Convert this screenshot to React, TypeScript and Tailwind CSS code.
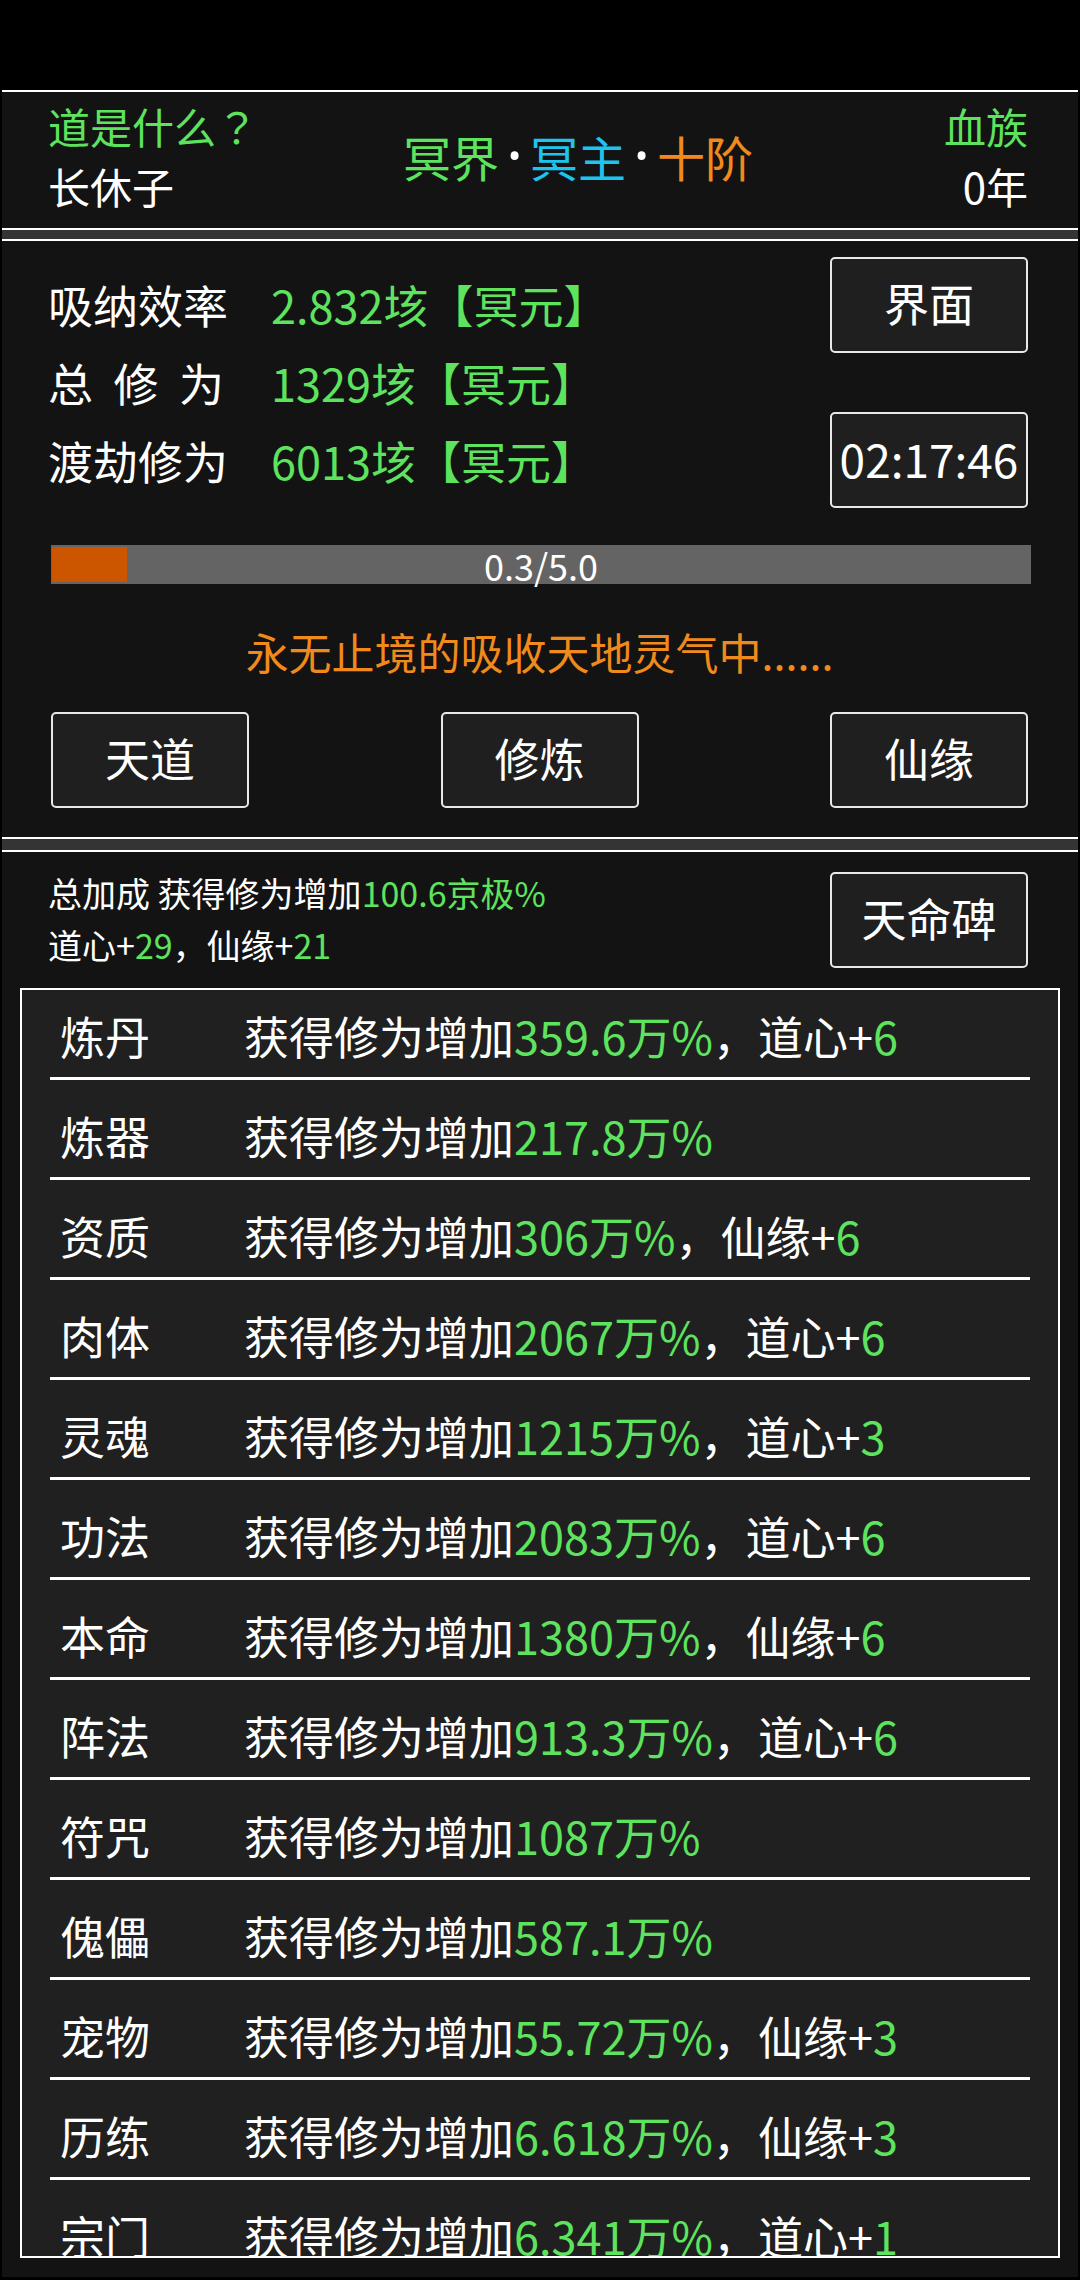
import type { ReactNode } from "react";

const FONT = { fontFamily: '"Noto Sans CJK SC", "Noto Sans", sans-serif' };
const JP = { fontFamily: '"Noto Sans CJK JP", "Noto Sans CJK SC", sans-serif' };
const LATIN = { fontFamily: '"Noto Sans", "DejaVu Sans", sans-serif' };

type Bonus = {
  name: string;
  value: string;
  extra?: { label: string; amount: string };
};

const BONUSES: Bonus[] = [
  { name: "炼丹", value: "359.6万%", extra: { label: "道心+", amount: "6" } },
  { name: "炼器", value: "217.8万%" },
  { name: "资质", value: "306万%", extra: { label: "仙缘+", amount: "6" } },
  { name: "肉体", value: "2067万%", extra: { label: "道心+", amount: "6" } },
  { name: "灵魂", value: "1215万%", extra: { label: "道心+", amount: "3" } },
  { name: "功法", value: "2083万%", extra: { label: "道心+", amount: "6" } },
  { name: "本命", value: "1380万%", extra: { label: "仙缘+", amount: "6" } },
  { name: "阵法", value: "913.3万%", extra: { label: "道心+", amount: "6" } },
  { name: "符咒", value: "1087万%" },
  { name: "傀儡", value: "587.1万%" },
  { name: "宠物", value: "55.72万%", extra: { label: "仙缘+", amount: "3" } },
  { name: "历练", value: "6.618万%", extra: { label: "仙缘+", amount: "3" } },
  { name: "宗门", value: "6.341万%", extra: { label: "道心+", amount: "1" } },
];

function Green({ children }: { children: ReactNode }) {
  return <span className="text-[#5ee35e]">{children}</span>;
}

function BoxButton({ children, className = "" }: { children: ReactNode; className?: string }) {
  return (
    <button
      type="button"
      className={`flex h-[96px] w-[198px] shrink-0 items-center justify-center rounded-[5px] border-2 border-[#e8e8e8] bg-[#1f1f1f] pb-[5px] text-[45px] leading-none text-white ${className}`}
    >
      {children}
    </button>
  );
}

function Dot() {
  return (
    <span className="inline-block w-[31px] -translate-y-[2px] text-center text-[64px] leading-none text-white" style={LATIN}>
      ·
    </span>
  );
}

function StatRow({ label, value }: { label: ReactNode; value: string }) {
  return (
    <div className="flex h-[78px] items-center">
      <div className="w-[223px] text-white">{label}</div>
      <div className="whitespace-nowrap text-[#5ee35e]">{value}</div>
    </div>
  );
}

export default function App() {
  return (
    <div className="h-[2280px] w-[1080px] overflow-hidden bg-black" style={FONT}>
      <div className="h-[90px]" />

      <div className="mx-[2px]">
        {/* header */}
        <div className="flex h-[140px] items-center border-y-2 border-white bg-[#131313] pb-[8px] pl-[46px] pr-[50px]">
          <div className="w-[355px] text-[42px] leading-[60px]">
            <div className="text-[#5ee35e]">
              道是什么<span style={JP}>？</span>
            </div>
            <div className="text-white">长休子</div>
          </div>
          <div className="flex items-center whitespace-nowrap text-[48px] leading-none">
            <span className="text-[#5ee35e]">冥界</span>
            <Dot />
            <span className="text-[#1ec3ee]">冥主</span>
            <Dot />
            <span className="text-[#f08a1c]">十阶</span>
          </div>
          <div className="flex-1 text-right text-[42px] leading-[60px]">
            <div className="text-[#5ee35e]">血族</div>
            <div className="text-white">0年</div>
          </div>
        </div>

        <div className="h-[9px] bg-[#343434]" />

        {/* cultivation panel */}
        <div className="border-y-2 border-white bg-[#131313] pb-[29px] pl-[49px] pr-[50px] pt-[16px] text-[45px]">
          <div className="flex items-start justify-between">
            <div className="-ml-[3px] mt-[8px] leading-none">
              <StatRow label="吸纳效率" value="2.832垓【冥元】" />
              <StatRow
                label={
                  <div className="flex w-[176px] justify-between">
                    <span>总</span>
                    <span>修</span>
                    <span>为</span>
                  </div>
                }
                value="1329垓【冥元】"
              />
              <StatRow label="渡劫修为" value="6013垓【冥元】" />
            </div>
            <div className="flex flex-col gap-[59px]">
              <BoxButton>界面</BoxButton>
              <BoxButton className="text-[46px]">02:17:46</BoxButton>
            </div>
          </div>

          <div className="relative -mr-[3px] mt-[37px] h-[39px] bg-[#646464]">
            <div className="absolute left-[1px] top-[2px] h-[35px] w-[75px] bg-[#cc5500]" />
            <div className="absolute inset-0 flex items-center justify-center text-[36px] leading-none text-white">
              0.3/5.0
            </div>
          </div>

          <div className="mt-[37px] text-center text-[43px] leading-[60px] text-[#f08a1c]">
            永无止境的吸收天地灵气中......
          </div>

          <div className="mt-[31px] flex justify-between">
            <BoxButton>天道</BoxButton>
            <BoxButton>修炼</BoxButton>
            <BoxButton>仙缘</BoxButton>
          </div>
        </div>

        <div className="h-[11px] bg-[#343434]" />

        {/* bonus panel */}
        <div className="border-t-2 border-white bg-[#131313] pb-[19px]">
          <div className="flex items-start justify-between pl-[49px] pr-[50px] pt-[18px]">
            <div className="-ml-[3px] -mt-[3px] text-[34px] leading-[52px] text-white">
              <div>
                总加成 获得修为增加<Green>100.6京极%</Green>
              </div>
              <div>
                道心+<Green>29</Green>，仙缘+<Green>21</Green>
              </div>
            </div>
            <BoxButton className="mt-[2px]">天命碑</BoxButton>
          </div>

          <div className="mx-[18px] mt-[17px] h-[1270px] overflow-hidden border-2 border-white bg-[#202020]">
            <div className="-mt-[10px] px-[28px]">
              {BONUSES.map((b) => (
                <div key={b.name} className="border-b-[3px] border-white">
                  <div className="flex pb-[14px] pl-[10px] pt-[29px] text-[45px] leading-[54px] text-white">
                    <div className="w-[184px] shrink-0">{b.name}</div>
                    <div className="whitespace-nowrap">
                      获得修为增加<Green>{b.value}</Green>
                      {b.extra ? (
                        <>
                          ，{b.extra.label}
                          <Green>{b.extra.amount}</Green>
                        </>
                      ) : null}
                    </div>
                  </div>
                </div>
              ))}
            </div>
          </div>
        </div>
      </div>
    </div>
  );
}
